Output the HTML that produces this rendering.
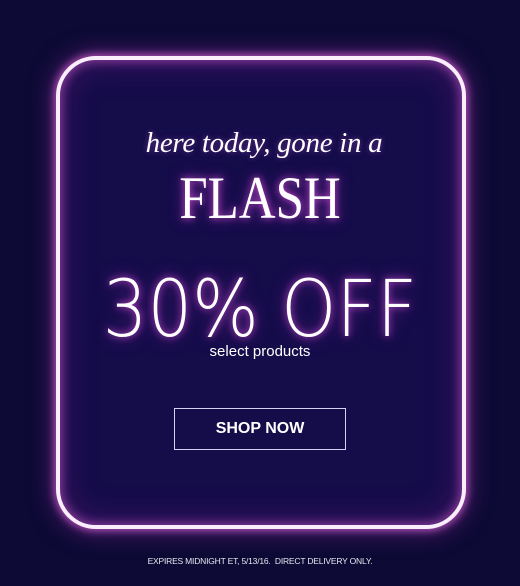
<!DOCTYPE html>
<html><head><style>
html,body{margin:0;padding:0}
body{width:520px;height:586px;background:#0d0a35;position:relative;overflow:hidden;font-family:"Liberation Sans",sans-serif;color:#fff}
.box{position:absolute;left:56px;top:56px;width:402px;height:465px;border:4px solid #fbeefc;border-radius:40px;background:#150c4a;
box-shadow:0 0 8px 2px rgba(200,90,200,.8),0 0 22px 6px rgba(120,40,140,.5),inset 0 0 10px 2px rgba(200,90,200,.6),inset 0 0 28px 8px rgba(100,30,120,.4)}
.t{position:absolute;left:0;width:520px;text-align:center;white-space:nowrap}
.h{top:127px;left:4px;font-family:"Liberation Serif",serif;font-style:italic;font-size:29px;letter-spacing:-0.3px;text-shadow:0 0 6px rgba(200,100,220,.5)}
.f{top:168px;font-family:"Liberation Serif",serif;font-size:60px;line-height:60px;transform:scaleX(.85);text-shadow:0 0 8px rgba(220,80,220,.9),0 0 16px rgba(180,60,200,.6)}
.o{top:267px;font-family:"DejaVu Sans","Liberation Sans",sans-serif;font-size:78px;line-height:86px;font-weight:200;transform:scaleX(.9);text-shadow:0 0 8px rgba(220,80,220,.9),0 0 18px rgba(180,60,200,.6)}
.s{top:343px;font-size:15px}
.btn{position:absolute;left:174px;top:408px;width:170px;height:40px;border:1px solid #d8d0f0;font-weight:bold;font-size:16px;line-height:40px;text-align:center}
.ft{top:556px;font-size:8.5px;letter-spacing:-0.2px;color:#e8e6f0}
</style></head><body>
<div class="box"></div>
<div class="t h">here today, gone in a</div>
<div class="t f">FLASH</div>
<div class="t o">30% OFF</div>
<div class="t s">select products</div>
<div class="btn">SHOP NOW</div>
<div class="t ft">EXPIRES MIDNIGHT ET, 5/13/16.&nbsp; DIRECT DELIVERY ONLY.</div>
</body></html>
